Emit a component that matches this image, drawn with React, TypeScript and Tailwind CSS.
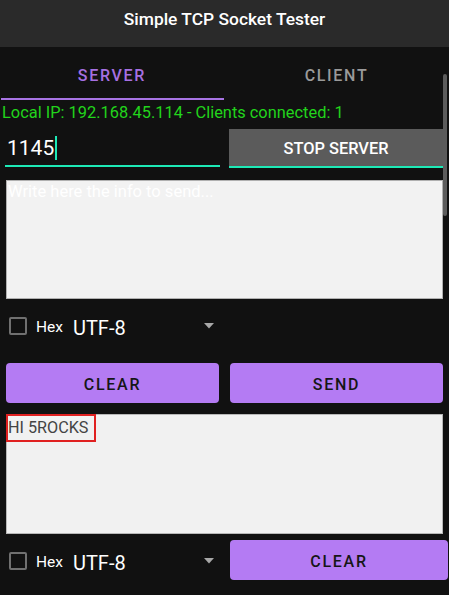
import { ReactNode } from 'react';

const font = { fontFamily: 'Roboto, "Noto Sans", sans-serif' };

function Checkbox() {
  return <div className="w-[18px] h-[18px] border-2 border-[#707070] rounded-[2px]" />;
}

function Encoding() {
  return (
    <div className="flex items-center">
      <div className="ml-[9px]">
        <Checkbox />
      </div>
      <span className="ml-[9px] pt-[3px] text-[15.5px] text-white">Hex</span>
      <span className="ml-[10px] pt-[3px] text-[20px] text-white">UTF-8</span>
      {/* dropdown arrow */}
      <svg className="ml-[78px]" width="10" height="6" viewBox="0 0 10 6">
        <path d="M0 0 L10 0 L5 5.5 Z" fill="#a8a8a8" />
      </svg>
    </div>
  );
}

function PurpleButton({ children, className }: { children: ReactNode; className: string }) {
  return (
    <button
      className={
        'h-[40px] pt-[3px] rounded-[4px] bg-[#b47bf3] text-[16px] font-medium tracking-[1.7px] text-[#161616] ' +
        className
      }
    >
      {children}
    </button>
  );
}

export default function App() {
  return (
    <div className="relative w-[449px] h-[595px] bg-[#111111] overflow-hidden" style={font}>
      {/* Title bar */}
      <div className="h-[47px] bg-[#2a2a2a] flex justify-center pt-[8px]">
        <span className="text-[17.4px] leading-[22px] font-medium text-white">Simple TCP Socket Tester</span>
      </div>

      {/* Tabs */}
      <div className="flex h-[53px]">
        <div className="w-[224px] flex flex-col">
          <div className="flex-1 flex items-center justify-center pt-[7px] text-[16px] font-medium tracking-[1.7px] text-[#a670e2]">
            SERVER
          </div>
          <div className="h-[2px] bg-[#a874e4] ml-[1px]" />
        </div>
        <div className="flex-1 flex items-center justify-center pt-[4px] text-[16px] font-medium tracking-[1.7px] text-[#9a9a9a]">
          CLIENT
        </div>
      </div>

      {/* Status */}
      <div className="pl-[2px] pt-[2px] text-[16.4px] leading-[22px] text-[#22d41c]">
        Local IP: 192.168.45.114 - Clients connected: 1
      </div>

      {/* Port + stop */}
      <div className="flex mt-[5px] px-[6px] gap-[9px] h-[40px]">
        <div className="w-[214px] flex flex-col">
          <div className="pt-[7px] pl-[1px] flex items-center text-[21px] leading-[24px] text-white">
            1145
            <span className="w-[2px] h-[24px] bg-[#1de9b6] ml-[1px]" />
          </div>
          <div className="mt-[5px] h-[2px] bg-[#1de9b6] -ml-[1px]" />
        </div>
        <button className="w-[214px] h-[39px] bg-[#5b5b5b] border-b-2 border-[#1de9b6] text-[16.4px] font-medium text-white pt-[4px]">
          STOP SERVER
        </button>
      </div>

      {/* Send area */}
      <div className="mt-[11px] mx-[6px] h-[119px] bg-[#f2f2f2] border border-[#b0b0b0] px-[1px] text-[16.5px] leading-[22px] text-white">
        Write here the info to send...
      </div>

      <div className="mt-[7px] h-[40px] flex items-center">
        <Encoding />
      </div>

      <div className="mt-[17px] flex px-[6px] gap-[11px]">
        <PurpleButton className="w-[213px]">CLEAR</PurpleButton>
        <PurpleButton className="w-[213px]">SEND</PurpleButton>
      </div>

      {/* Received area */}
      <div className="mt-[11px] mx-[6px] h-[120px] bg-[#f1f1f1] border border-[#b8b8b8] relative">
        <div className="absolute -left-[1px] -top-[1px] w-[90px] h-[28px] border-2 border-[#e02020]" />
        <div className="pl-[1px] pt-[3px] text-[16.2px] leading-[20px] text-[#444444]">HI 5ROCKS</div>
      </div>

      <div className="mt-[7px] flex items-center h-[38px]">
        <div className="w-[230px] pt-[2px]">
          <Encoding />
        </div>
        <PurpleButton className="w-[218px] h-[38px]">CLEAR</PurpleButton>
      </div>

      {/* Scrollbar thumb */}
      <div className="absolute right-[2px] top-[74px] w-[4px] h-[142px] rounded-[2px] bg-[#5c5c5c]" />
    </div>
  );
}
